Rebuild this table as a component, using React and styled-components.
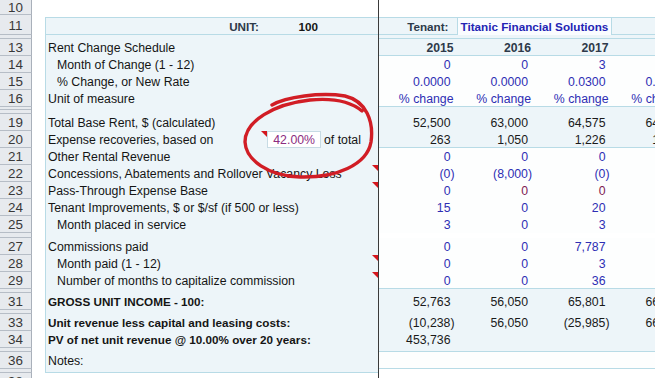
import React from "react";
import styled, { createGlobalStyle } from "styled-components";

const PANEL = "#edf5f9";
const RULE = "#b8dbe6";
const INPUT = "#2e2eb4";
const SLATE = "#2e3a4a";
const MAROON = "#7d2152";

const GlobalStyle = createGlobalStyle`
  html, body {
    margin: 0;
    padding: 0;
    background: #fff;
    overflow: hidden;
  }
  body {
    font-family: "Liberation Sans", Arial, sans-serif;
    font-size: 12.3px;
    color: #151515;
  }
`;

const rows = [
  { n: 10, h: 15, blank: true },
  { n: 11, h: 20, head: true },
  { gap: 4, right: PANEL, rule: true },
  { n: 13, label: "Rent Change Schedule", kind: "year", vals: ["2015", "2016", "2017", "2018"], rule: true },
  { n: 14, label: "Month of Change (1 - 12)", indent: true, kind: "input", vals: ["0", "0", "3", "3"] },
  { n: 15, label: "% Change, or New Rate", indent: true, kind: "input", vals: ["0.0000", "0.0000", "0.0300", "0.0300"] },
  { n: 16, label: "Unit of measure", kind: "input", text: true, vals: ["% change", "% change", "% change", "% change"], rule: true },
  { gap: 7, double: true, right: PANEL },
  { n: 19, label: "Total Base Rent, $  (calculated)", kind: "calc", vals: ["52,500", "63,000", "64,575", "64,575"] },
  { n: 20, label: "Expense recoveries, based on", pct: "42.00%", tail: "of total", labelNote: true, kind: "calc", vals: ["263", "1,050", "1,226", "1,287"], rule: true },
  { n: 21, label: "Other Rental Revenue", kind: "input", vals: ["0", "0", "0", "0"] },
  { n: 22, label: "Concessions, Abatements and Rollover Vacancy Loss", note: true, kind: "input", vals: ["(0)", "(8,000)", "(0)", "(0)"] },
  { n: 23, label: "Pass-Through Expense Base", note: true, kind: "input", vals: ["0", "0", "0", "0"], tint: [null, MAROON, MAROON, MAROON] },
  { n: 24, label: "Tenant Improvements, $ or $/sf (if 500 or less)", kind: "input", vals: ["15", "0", "20", "0"] },
  { n: 25, label: "Month placed in service", indent: true, kind: "input", vals: ["3", "0", "3", "0"] },
  { gap: 5, right: "#fff" },
  { n: 27, label: "Commissions paid", kind: "input", vals: ["0", "0", "7,787", "0"] },
  { n: 28, label: "Month paid (1 - 12)", indent: true, note: true, kind: "input", vals: ["0", "0", "3", "0"] },
  { n: 29, label: "Number of months to capitalize commission", indent: true, note: true, kind: "input", vals: ["0", "0", "36", "0"], rule: true },
  { gap: 4, right: PANEL },
  { n: 31, label: "GROSS UNIT INCOME - 100:", bold: true, kind: "calc", vals: ["52,763", "56,050", "65,801", "66,380"] },
  { gap: 4, right: PANEL },
  { n: 33, label: "Unit revenue less capital and leasing costs:", bold: true, kind: "calc", vals: ["(10,238)", "56,050", "(25,985)", "66,380"] },
  { n: 34, label: "PV of net unit revenue @ 10.00% over 20 years:", bold: true, kind: "calc", vals: ["453,736"] },
  { gap: 4, right: PANEL, rule: true },
  { n: 36, label: "Notes:", kind: "input", vals: [], rule: true },
  { gap: 4, end: true },
  { n: 38, h: 17, blank: true },
];

const App = () => {
  return (
    <>
      <GlobalStyle />
      <Sheet>
        {rows.map((r, i) => (
          <SheetRow key={i} r={r} />
        ))}
        <Annotation viewBox="0 0 655 378">
          <path d="M272 105 C286 97 320 92 345 96 C366 101 374 121 371 142 C367 165 336 178 300 177 C268 176 246 160 245 142 C245 121 274 104 310 100 C331 98 350 101 362 111" />
        </Annotation>
      </Sheet>
    </>
  );
};

const SheetRow = ({ r }) => {
  if (r.gap) {
    return (
      <Row $h={r.gap}>
        <RowHead $split={r.double} />
        <Gutter />
        <LeftPane $panel $rule={r.end} />
        <Freeze />
        <RightPane $bg={r.end ? "#fff" : r.right} $rule={r.rule} />
      </Row>
    );
  }

  if (r.blank) {
    return (
      <Row $h={r.h}>
        <RowHead>{r.n}</RowHead>
        <Gutter />
        <LeftPane />
        <Freeze />
        <RightPane $bg="#fff" />
      </Row>
    );
  }

  if (r.head) {
    return (
      <Row $h={r.h}>
        <RowHead>{r.n}</RowHead>
        <Gutter />
        <LeftPane $panel $top $rule>
          <Label $right $color={SLATE} $bold>UNIT:</Label>
          <Num $pad={3} $bold>100</Num>
          <Cell />
        </LeftPane>
        <Freeze />
        <RightPane $bg={PANEL} $top $rule>
          <Num $pad={8} $bold $color={SLATE}>Tenant:</Num>
          <TenantBox>Titanic Financial Solutions</TenantBox>
        </RightPane>
      </Row>
    );
  }

  const rightBg = r.kind === "input" ? "#fdfefe" : PANEL;

  return (
    <Row $h={17}>
      <RowHead>{r.n}</RowHead>
      <Gutter />
      <LeftPane $panel>
        <Label $indent={r.indent} $bold={r.bold}>
          {r.label}
          {r.labelNote && <NoteMark />}
        </Label>
        {r.pct ? <PctBox>{r.pct}</PctBox> : <Cell />}
        <Cell $pl={3}>
          {r.tail}
          {r.note && <NoteMark />}
        </Cell>
      </LeftPane>
      <Freeze />
      <RightPane $bg={rightBg} $rule={r.rule}>
        {r.vals.map((v, i) => {
          const neg = v.startsWith("(");
          const pad = r.kind === "year" || r.text ? 3 : neg ? 2 : 6;
          let color = r.kind === "input" ? INPUT : r.kind === "year" ? SLATE : "#1a1a1a";
          if (r.tint && r.tint[i]) color = r.tint[i];
          return (
            <Num key={i} $pad={pad} $color={color} $bold={r.kind === "year"} $year={r.kind === "year"}>
              {v}
            </Num>
          );
        })}
      </RightPane>
    </Row>
  );
};

export default App;

// Styled Components
const Sheet = styled.div`
  position: relative;
  width: 655px;
  height: 378px;
  overflow: hidden;
  display: flex;
  flex-direction: column;
`;

const Row = styled.div`
  display: flex;
  flex: none;
  height: ${(p) => p.$h}px;
`;

const RowHead = styled.div`
  width: 32px;
  flex: none;
  box-sizing: border-box;
  background: #e7eaee;
  border-right: 1px solid #a9b0ba;
  border-bottom: 1px solid #b6bdc6;
  display: flex;
  align-items: center;
  justify-content: center;
  font-size: 13.4px;
  color: #383838;
  padding-top: 1px;
  ${(p) =>
    p.$split &&
    `background-image: linear-gradient(#e7eaee 0 2px, #b6bdc6 2px 3px, #e7eaee 3px);`}
`;

const Gutter = styled.div`
  width: 13px;
  flex: none;
  background: #fff;
`;

const LeftPane = styled.div`
  width: 333px;
  flex: none;
  box-sizing: border-box;
  display: grid;
  grid-template-columns: 221px 54px 1fr;
  background: ${(p) => (p.$panel ? PANEL : "#fff")};
  border-left: 1px solid ${(p) => (p.$panel ? RULE : "#fff")};
  ${(p) => p.$top && `margin-top: 2px; border-top: 1px solid ${RULE};`}
  ${(p) => p.$rule && `box-shadow: inset 0 -1px 0 ${RULE};`}
`;

const Freeze = styled.div`
  width: 1px;
  flex: none;
  background: #3a3a3a;
`;

const RightPane = styled.div`
  flex: 1;
  min-width: 0;
  overflow: hidden;
  box-sizing: border-box;
  display: grid;
  grid-template-columns: repeat(4, 77.5px);
  background: ${(p) => p.$bg || "#fff"};
  ${(p) => p.$top && `margin-top: 2px; border-top: 1px solid ${RULE};`}
  ${(p) => p.$rule && `box-shadow: inset 0 -1px 0 ${RULE};`}
`;

const Cell = styled.div`
  position: relative;
  display: flex;
  align-items: center;
  white-space: nowrap;
  min-width: 0;
  padding-left: ${(p) => p.$pl || 0}px;
`;

const Label = styled(Cell)`
  padding-left: ${(p) => (p.$indent ? 11 : 2)}px;
  padding-right: ${(p) => (p.$right ? 8 : 0)}px;
  justify-content: ${(p) => (p.$right ? "flex-end" : "flex-start")};
  font-weight: ${(p) => (p.$bold ? "bold" : "normal")};
  font-size: ${(p) => (p.$bold ? "11.7px" : "12.3px")};
  color: ${(p) => p.$color || "#151515"};
  z-index: 1;
`;

const Num = styled(Cell)`
  justify-content: flex-end;
  padding-right: ${(p) => p.$pad}px;
  color: ${(p) => p.$color || "#151515"};
  font-weight: ${(p) => (p.$bold ? "bold" : "normal")};
  font-size: ${(p) => (p.$year ? "12.2px" : p.$bold ? "11.7px" : "12.3px")};
`;

const PctBox = styled(Cell)`
  justify-content: flex-end;
  padding-right: 5px;
  box-sizing: border-box;
  background: #fff;
  border: 1px solid #c7dbe4;
  color: #8c2c80;
`;

const TenantBox = styled(Cell)`
  grid-column: span 2;
  box-sizing: border-box;
  padding-left: 3px;
  background: #fafcff;
  border-left: 1px solid ${RULE};
  border-right: 1px solid ${RULE};
  color: #2424b4;
  font-weight: bold;
  font-size: 11.7px;
`;

const NoteMark = styled.span`
  position: absolute;
  top: 0;
  right: 0;
  width: 0;
  height: 0;
  border-top: 6px solid #d4161d;
  border-left: 6px solid transparent;
`;

const Annotation = styled.svg`
  position: absolute;
  left: 0;
  top: 0;
  width: 655px;
  height: 378px;
  pointer-events: none;
  z-index: 5;

  path {
    fill: none;
    stroke: #d11d25;
    stroke-width: 3.4;
    stroke-linecap: round;
    stroke-linejoin: round;
  }
`;
